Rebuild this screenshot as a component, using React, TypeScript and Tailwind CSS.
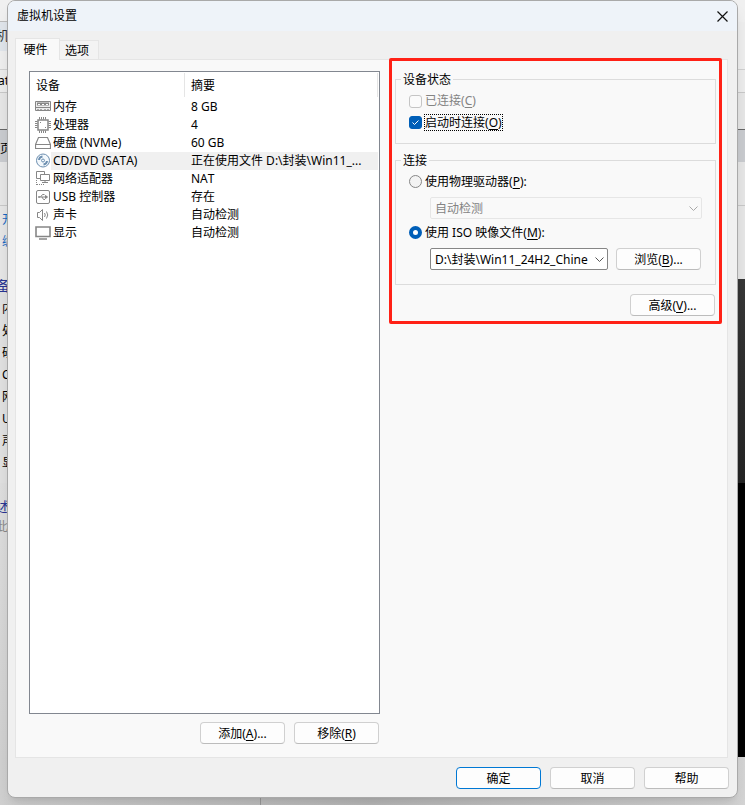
import React, { ReactNode, useState } from "react";

type Device = { name: string; summary: string; icon: ReactNode };

function Icon({ children, color = "#868686" }: { children: ReactNode; color?: string }) {
  return (
    <svg
      width="16"
      height="16"
      viewBox="0 0 16 16"
      fill="none"
      stroke={color}
      className="shrink-0"
      aria-hidden="true"
    >
      {children}
    </svg>
  );
}

const devices: Device[] = [
  {
    name: "内存",
    summary: "8 GB",
    icon: (
      <Icon>
        <path d="M.5 2.500h15v9H.5z" fill="#ececec" />
        <path d="M2 5h12" strokeWidth="3" />
        <path d="M3 5.500h2M7 5.500h2M11 5.500h2" stroke="#fff" />
        <path d="M.5 8.500h15" />
        <path d="M2 10.500h2M5 10.500h2M9 10.500h2M12 10.500h2" stroke="#aaa" />
      </Icon>
    ),
  },
  {
    name: "处理器",
    summary: "4",
    icon: (
      <Icon>
        <path d="M3 3h10v10H3z" strokeWidth="1.500" />
        <path d="M4.500 0v2.500M6.500 0v2.500M8.500 0v2.500M10.500 0v2.500M4.500 13.500V16M6.500 13.500V16M8.500 13.500V16M10.500 13.500V16M0 4.500h2.500M0 6.500h2.500M0 8.500h2.500M0 10.500h2.500M13.500 4.500H16M13.500 6.500H16M13.500 8.500H16M13.500 10.500H16" />
        <path d="M5 5.500h1M10 10.500h1" />
      </Icon>
    ),
  },
  {
    name: "硬盘 (NVMe)",
    summary: "60 GB",
    icon: (
      <Icon>
        <path d="M3.500 2.500h9l3 7v4H.5v-4z" strokeWidth="1.200" />
        <path d="M.5 9.500h15" />
      </Icon>
    ),
  },
  {
    name: "CD/DVD (SATA)",
    summary: "正在使用文件 D:\\封装\\Win11_...",
    icon: (
      <Icon color="#6d8fb0">
        <circle cx="8" cy="7.500" r="6.500" fill="#f3f8fc" />
        <circle cx="8" cy="7.500" r="1.500" />
        <path d="M4 7a4 4 0 0 1 3.500-3.500M12 8a4 4 0 0 1-3.500 3.500" strokeWidth="2" />
      </Icon>
    ),
  },
  {
    name: "网络适配器",
    summary: "NAT",
    icon: (
      <Icon>
        <path d="M1.500.5h8v7h-8z" />
        <path d="M5.500 3.500h9v6h-9z" fill="#fff" />
        <path d="M10 9.500v2M7 11.500h6" />
        <path d="M1.500 9v5M2 13.500h8" strokeDasharray="1 1" />
      </Icon>
    ),
  },
  {
    name: "USB 控制器",
    summary: "存在",
    icon: (
      <Icon>
        <rect x="1.500" y="1.500" width="13" height="13" rx="1.500" />
        <path d="M4 8h8M5.500 8l2-2.500h2M7 8l1.500 2.500H10" />
        <path d="M12.500 8l-2-1.500v3z" fill="#868686" />
        <circle cx="4" cy="8" r=".6" />
      </Icon>
    ),
  },
  {
    name: "声卡",
    summary: "自动检测",
    icon: (
      <Icon>
        <path d="M2.500 5.500h2l3-3v11l-3-3h-2z" />
        <path d="M9.500 6q1.500 2 0 4M11.500 4.500q2.500 3.500 0 7" />
      </Icon>
    ),
  },
  {
    name: "显示",
    summary: "自动检测",
    icon: (
      <Icon>
        <path d="M1 2h14v9.500H1z" strokeWidth="1.600" />
        <path d="M4 14h8" strokeWidth="1.500" />
      </Icon>
    ),
  },
];

// slices of the main window that stick out left of the dialog
const leftEdge = [
  { text: "机", className: "mt-[26px] -ml-1 text-[13px] text-[#333]" },
  { text: "at", className: "mt-[28px] -ml-0.5 text-black" },
  { text: "页", className: "mt-[50px] text-black" },
  { text: "开", className: "mt-[53px] ml-0.5 text-[#1768c0]" },
  { text: "编", className: "mt-1 ml-0.5 text-[#1768c0]" },
  { text: "备", className: "mt-[26px] -ml-1 text-[14px] text-[#283593]" },
  { text: "内", className: "mt-[5px] ml-0.5 text-black" },
  { text: "处", className: "mt-1 ml-0.5 text-black" },
  { text: "硬", className: "mt-1 ml-0.5 text-black" },
  { text: "CD", className: "mt-1 ml-0.5 text-black" },
  { text: "网", className: "mt-1 ml-0.5 text-black" },
  { text: "US", className: "mt-1 ml-0.5 text-black" },
  { text: "声", className: "mt-1 ml-0.5 text-black" },
  { text: "显", className: "mt-1 ml-0.5 text-black" },
  { text: "述", className: "mt-[26px] -ml-1 text-[14px] text-[#283593]" },
  { text: "此", className: "mt-0.5 -ml-1 text-[#888]" },
];

function MainWindow() {
  return (
    <div className="absolute inset-0 overflow-hidden" aria-hidden="true">
      <div className="flex h-full flex-col bg-[#e6e6e6]">
        <div className="flex h-[22px] bg-[#f0f0f0]">
          <div className="w-2 border-b border-[#bbb]" />
        </div>
        <div className="flex h-[48px] border-b border-[#d0d0d0] bg-[#eeeeee]">
          <div className="h-[29px] w-2 bg-[#e0e5eb]" />
        </div>
        <div className="h-[23px] border-b border-[#c8c8c8] bg-[#ececec]" />
        <div className="h-[37px] border-b border-[#666]" />
        <div className="h-8 bg-[#c9cbcf]" />
        <div className="h-11 border-b border-[#c8c8c8]" />
        <div className="h-[73px]" />
        <div className="flex h-[204px] justify-end bg-[#e0e0e0]">
          <div className="w-2 bg-linear-to-b from-[#373737] to-[#242424]" />
        </div>
        <div className="flex h-[274px] justify-end bg-linear-to-b from-[#dedede] to-[#d0d0d0]">
          <div className="w-2 bg-black" />
        </div>
        <div className="flex flex-1 bg-linear-to-r from-[#d0d0d0] via-[#b8b8b8] to-[#d4d4d4]">
          <div className="w-[261px] border-r border-[#999]" />
        </div>
      </div>
      <div className="absolute inset-y-0 left-0 flex w-2 flex-col overflow-hidden whitespace-nowrap">
        {leftEdge.map((item, i) => (
          <div key={i} className={`h-[18px] shrink-0 leading-[18px] ${item.className}`}>
            {item.text}
          </div>
        ))}
      </div>
    </div>
  );
}

function PushButton({ children, primary }: { children: ReactNode; primary?: boolean }) {
  return (
    <button
      type="button"
      className={`h-[22px] w-[85px] shrink-0 rounded border bg-[#fdfdfd] pt-0.5 text-center leading-[18px] ${
        primary ? "border-[#0078d4]" : "border-[#d0d0d0] border-b-[#bcbcbc]"
      }`}
    >
      {children}
    </button>
  );
}

function Key({ children }: { children: string }) {
  return (
    <>
      (<u className="underline-offset-2">{children}</u>)
    </>
  );
}

function Combo({ label, value, disabled }: { label: string; value: string; disabled?: boolean }) {
  return (
    <div className="relative min-w-0 flex-1">
      <select
        aria-label={label}
        disabled={disabled}
        className="block h-[22px] w-full appearance-none rounded-xs border border-[#868686] bg-white pt-0.5 pr-[18px] pl-1 leading-[18px] text-black opacity-100 disabled:border-[#e6e6e6] disabled:bg-[#f9f9f9] disabled:text-[#838383]"
      >
        <option>{value}</option>
      </select>
      <svg
        width="9"
        height="5"
        viewBox="0 0 9 5"
        fill="none"
        stroke={disabled ? "#a8a8a8" : "#555"}
        className="pointer-events-none absolute top-[9px] right-1"
        aria-hidden="true"
      >
        <path d="M.5.5l4 4 4-4" />
      </svg>
    </div>
  );
}

function DeviceList() {
  const [selected, setSelected] = useState(3);

  return (
    <div className="flex-1 border border-[#828790] bg-white">
      <table className="w-full table-fixed border-collapse text-left">
        <thead>
          <tr className="h-[26px]">
            <th className="w-[155px] p-0 font-normal">
              <div className="h-6 border-r border-[#e5e5e5] pl-1.5 leading-[26px]">设备</div>
            </th>
            <th className="p-0 pr-px font-normal">
              <div className="h-6 border-r border-[#e5e5e5] pl-1.5 leading-[26px]">摘要</div>
            </th>
          </tr>
        </thead>
        <tbody>
          {devices.map((device, i) => {
            const bg = i === selected ? "bg-[#f0f0f0]" : "";
            return (
              <tr key={device.name} className="h-[18px]" onClick={() => setSelected(i)}>
                <td className="p-0">
                  <div className="flex h-[18px] items-center pl-[5px] leading-[18px]">
                    {device.icon}
                    <span className={`h-[18px] flex-1 pl-0.5 ${bg}`}>{device.name}</span>
                  </div>
                </td>
                <td className="p-0 pr-px">
                  <div className={`h-[18px] truncate pl-1.5 leading-[18px] ${bg}`}>
                    {device.summary}
                  </div>
                </td>
              </tr>
            );
          })}
        </tbody>
      </table>
    </div>
  );
}

function Settings() {
  const [connectAtStart, setConnectAtStart] = useState(true);
  const [source, setSource] = useState("iso");
  const radio =
    "size-[13px] shrink-0 appearance-none rounded-full border border-[#868686] bg-[#f3f3f3] checked:border-4 checked:border-[#005fb8] checked:bg-white";

  return (
    <div className="relative flex min-w-0 flex-1 flex-col self-start">
      <fieldset className="border border-[#dcdcdc] px-[13px] pt-0.5 pb-2.5">
        <legend className="-ml-2 h-[18px] px-0.5 leading-5">设备状态</legend>
        <label className="flex h-[22px] items-center gap-[3px] text-[#838383]">
          <input
            type="checkbox"
            disabled
            className="size-[13px] appearance-none rounded-[3px] border border-[#c5c5c5] bg-[#fbfbfb]"
          />
          <span>
            已连接
            <Key>C</Key>
          </span>
        </label>
        <label className="flex h-[21px] items-center gap-0.5">
          <span className="relative flex">
            <input
              type="checkbox"
              checked={connectAtStart}
              onChange={(e) => setConnectAtStart(e.target.checked)}
              className="size-[13px] appearance-none rounded-[3px] border border-[#868686] bg-white checked:border-[#005fb8] checked:bg-[#005fb8]"
            />
            <svg
              viewBox="0 0 13 13"
              fill="none"
              stroke="#fff"
              className="pointer-events-none absolute inset-0"
              aria-hidden="true"
            >
              <path d="M3.500 6.500l2 2 4-4" />
            </svg>
          </span>
          <span className="border border-dotted border-black leading-[15px]">
            启动时连接
            <Key>O</Key>
          </span>
        </label>
      </fieldset>

      <fieldset className="mt-[7px] border border-[#dcdcdc] pt-0.5 pr-[13px] pb-3.5 pl-[13px]">
        <legend className="-ml-2 h-[18px] px-0.5 leading-5">连接</legend>
        <label className="flex h-[21px] items-center gap-[3px]">
          <input
            type="radio"
            name="source"
            checked={source === "drive"}
            onChange={() => setSource("drive")}
            className={radio}
          />
          <span>
            使用物理驱动器
            <Key>P</Key>:
          </span>
        </label>
        <div className="mt-[5px] flex pl-[21px]">
          <Combo label="物理驱动器" value="自动检测" disabled />
        </div>
        <label className="mt-[3px] flex h-[21px] items-center gap-[3px]">
          <input
            type="radio"
            name="source"
            checked={source === "iso"}
            onChange={() => setSource("iso")}
            className={radio}
          />
          <span>
            使用 ISO 映像文件
            <Key>M</Key>:
          </span>
        </label>
        <div className="mt-[5px] flex gap-2 pr-px pl-[21px]">
          <Combo label="ISO 映像文件" value="D:\封装\Win11_24H2_Chine" />
          <PushButton>
            浏览
            <Key>B</Key>...
          </PushButton>
        </div>
      </fieldset>

      <div className="mt-[9px] flex justify-end pr-px">
        <PushButton>
          高级
          <Key>V</Key>...
        </PushButton>
      </div>

      <div className="pointer-events-none absolute -top-3 -right-1.5 -bottom-2 -left-1.5 rounded-xs border-3 border-[#ff2116]" />
    </div>
  );
}

function App() {
  return (
    <div className="relative flex min-h-screen px-[7px] pb-[7px] font-['Noto_Sans','Noto_Sans_CJK_SC',sans-serif] text-[12px] text-black [font-kerning:none]">
      <MainWindow />
      <div className="relative flex min-w-0 flex-1 flex-col overflow-hidden rounded-lg border border-[#a9a9a9] bg-[#f0f0f0] shadow-lg">
        <div className="flex h-[30px] items-center justify-between bg-[#eef3f9] pr-[9px] pl-[9px]">
          <h1>虚拟机设置</h1>
          <button type="button" aria-label="关闭" className="flex">
            <svg width="11" height="11" viewBox="0 0 11 11" fill="none" stroke="#111" strokeWidth="1.2">
              <path d="M.5.5l10 10M10.500.5l-10 10" />
            </svg>
          </button>
        </div>

        <div className="flex flex-1 flex-col pt-[7px] pr-[9px] pb-2 pl-[7px]">
          <div className="flex items-end" role="tablist">
            <button
              type="button"
              role="tab"
              aria-selected="true"
              className="z-10 -mb-px h-[22px] w-[45px] border border-b-0 border-[#e5e5e5] bg-[#f9f9f9] pr-1"
            >
              硬件
            </button>
            <button
              type="button"
              role="tab"
              aria-selected="false"
              className="h-[19px] w-[39px] border border-b-0 border-l-0 border-[#e5e5e5] bg-[#f3f3f3] pt-0.5 pr-1 leading-4"
            >
              选项
            </button>
          </div>
          <div className="flex flex-1 gap-[15px] border border-[#e5e5e5] bg-[#f9f9f9] pt-2.5 pr-[11px] pb-[13px] pl-[13px]">
            <div className="mt-px flex w-[351px] flex-col">
              <DeviceList />
              <div className="mt-2 flex justify-end gap-[9px] pr-px">
                <PushButton>
                  添加
                  <Key>A</Key>...
                </PushButton>
                <PushButton>
                  移除
                  <Key>R</Key>
                </PushButton>
              </div>
            </div>
            <Settings />
          </div>
          <div className="-mr-px mt-[9px] flex justify-end gap-[9px]">
            <PushButton primary>确定</PushButton>
            <PushButton>取消</PushButton>
            <PushButton>帮助</PushButton>
          </div>
        </div>
      </div>
    </div>
  );
}

export default App;
